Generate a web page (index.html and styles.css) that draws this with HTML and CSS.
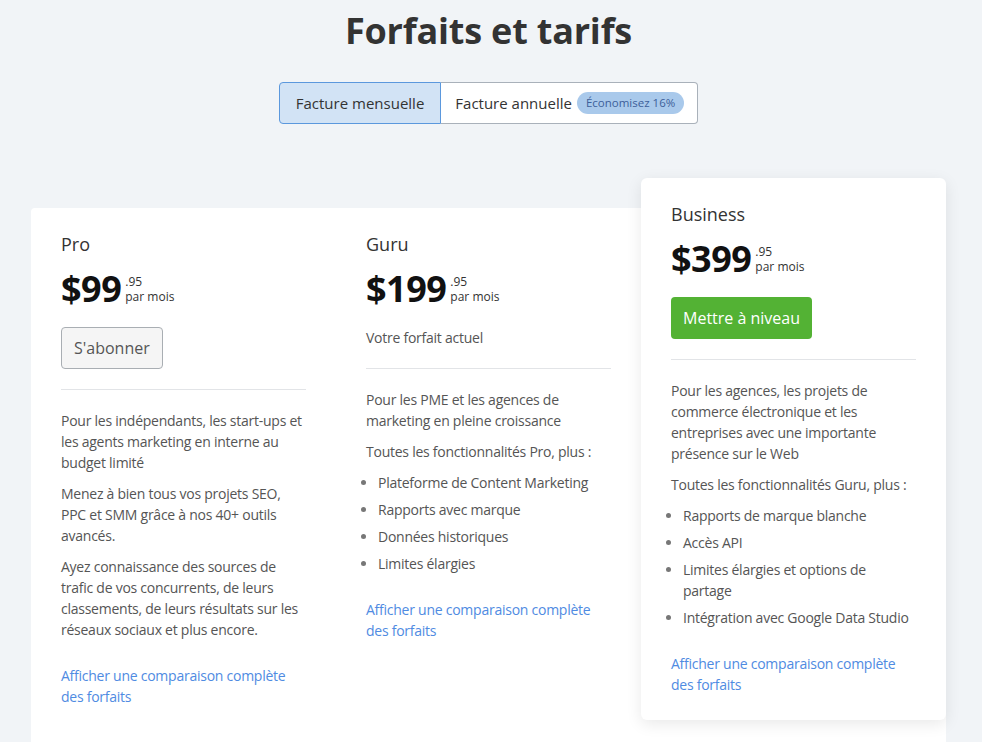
FILE: index.html
```html
<!DOCTYPE html>
<html lang="fr">
<head>
    <meta charset="UTF-8">
    <meta name="viewport" content="width=device-width, initial-scale=1.0">
    <title>Forfaits et tarifs</title>
    <link rel="stylesheet" href="styles.css">
</head>
<body>
    <div class="page">
        <h1>Forfaits et tarifs</h1>

        <div class="billing">
            <button class="billing-opt active">Facture mensuelle</button>
            <button class="billing-opt">Facture annuelle <span class="save-badge">Économisez 16%</span></button>
        </div>

        <div class="plans">
            <div class="plan">
                <div class="plan-name">Pro</div>
                <div class="price">
                    <span class="amount">$99</span>
                    <span class="price-small"><span>.95</span><span>par mois</span></span>
                </div>
                <button class="btn-subscribe">S'abonner</button>
                <hr>
                <p>Pour les indépendants, les start-ups et les agents marketing en interne au budget limité</p>
                <p>Menez à bien tous vos projets SEO, PPC et SMM grâce à nos 40+ outils avancés.</p>
                <p>Ayez connaissance des sources de trafic de vos concurrents, de leurs classements, de leurs résultats sur les réseaux sociaux et plus encore.</p>
                <a class="compare" href="#">Afficher une comparaison complète des forfaits</a>
            </div>

            <div class="plan">
                <div class="plan-name">Guru</div>
                <div class="price">
                    <span class="amount">$199</span>
                    <span class="price-small"><span>.95</span><span>par mois</span></span>
                </div>
                <div class="current">Votre forfait actuel</div>
                <hr>
                <p>Pour les PME et les agences de marketing en pleine croissance</p>
                <p>Toutes les fonctionnalités Pro, plus :</p>
                <ul>
                    <li>Plateforme de Content Marketing</li>
                    <li>Rapports avec marque</li>
                    <li>Données historiques</li>
                    <li>Limites élargies</li>
                </ul>
                <a class="compare" href="#">Afficher une comparaison complète des forfaits</a>
            </div>

            <div class="plan featured">
                <div class="plan-name">Business</div>
                <div class="price">
                    <span class="amount">$399</span>
                    <span class="price-small"><span>.95</span><span>par mois</span></span>
                </div>
                <button class="btn-upgrade">Mettre à niveau</button>
                <hr>
                <p>Pour les agences, les projets de commerce électronique et les entreprises avec une importante présence sur le Web</p>
                <p>Toutes les fonctionnalités Guru, plus :</p>
                <ul>
                    <li>Rapports de marque blanche</li>
                    <li>Accès API</li>
                    <li>Limites élargies et options de partage</li>
                    <li>Intégration avec Google Data Studio</li>
                </ul>
                <a class="compare" href="#">Afficher une comparaison complète des forfaits</a>
            </div>
        </div>
    </div>
</body>
</html>
```

FILE: styles.css
```css
body {
    margin: 0;
    background-color: #f1f4f7;
    font-family: "Open Sans", "Noto Sans", sans-serif;
    color: #555;
}
.page {
    width: 915px;
    margin-left: 31px;
    display: flex;
    flex-direction: column;
    align-items: center;
}
h1 {
    margin: 9px 0 0;
    font-size: 36px;
    line-height: 44px;
    font-weight: 700;
    color: #333;
    letter-spacing: -0.2px;
}
.billing {
    display: flex;
    margin-top: 29px;
    border-radius: 4px;
}
.billing-opt {
    display: flex;
    align-items: center;
    height: 42px;
    padding: 0 13px 0 14px;
    font-family: inherit;
    font-size: 15px;
    color: #333;
    background: white;
    border: 1px solid #a9b1ba;
    border-left: none;
    border-radius: 0 4px 4px 0;
    cursor: pointer;
}
.billing-opt.active {
    padding: 0 16px;
    background-color: #d2e3f5;
    border: 1px solid #5b98dd;
    border-radius: 4px 0 0 4px;
}
.save-badge {
    margin-left: 5px;
    padding: 0 9px;
    height: 22px;
    line-height: 22px;
    font-size: 11.5px;
    color: #3d5f9a;
    background-color: #a9c9eb;
    border-radius: 11px;
}
.plans {
    align-self: stretch;
    display: grid;
    grid-template-columns: repeat(3, 1fr);
    align-items: start;
    margin-top: 84px;
    padding-bottom: 60px;
    background: white;
    border-radius: 4px;
}
.plan {
    padding: 24px 30px 0;
    letter-spacing: -0.25px;
}
.plan.featured {
    margin-top: -30px;
    padding-bottom: 25px;
    background: white;
    border-radius: 6px;
    box-shadow: 0 4px 16px rgba(0, 0, 0, 0.09);
}
.plan-name {
    font-size: 18px;
    line-height: 24px;
    color: #333;
    letter-spacing: 0;
}
.price {
    display: flex;
    align-items: flex-start;
    margin-top: 12px;
}
.amount {
    font-size: 36px;
    line-height: 42px;
    font-weight: 700;
    color: #111;
    letter-spacing: -0.5px;
}
.price-small {
    display: flex;
    flex-direction: column;
    margin: 6px 0 0 4px;
    font-size: 12px;
    line-height: 15px;
    color: #333;
    letter-spacing: 0;
}
.btn-subscribe {
    display: block;
    margin-top: 17px;
    height: 42px;
    padding: 0 12px;
    font-family: inherit;
    font-size: 16px;
    color: #555;
    background-color: #f5f5f5;
    border: 1px solid #a9aeb3;
    border-radius: 4px;
    cursor: pointer;
}
.btn-upgrade {
    display: block;
    margin-top: 17px;
    height: 42px;
    padding: 0 12px;
    font-family: inherit;
    font-size: 16px;
    color: white;
    background-color: #53b234;
    border: none;
    border-radius: 4px;
    cursor: pointer;
}
.current {
    margin-top: 17px;
    font-size: 14px;
    line-height: 21px;
}
hr {
    margin: 20px 0;
    border: none;
    border-top: 1px solid #e2e4e7;
}
p {
    margin: 0 0 10px;
    font-size: 14px;
    line-height: 21px;
}
ul {
    margin: 0;
    padding-left: 12px;
}
li {
    margin-bottom: 6px;
    font-size: 14px;
    line-height: 21px;
}
li::marker {
    color: #777;
}
.compare {
    display: block;
    margin-top: 25px;
    font-size: 14px;
    line-height: 21px;
    color: #4f8be2;
    text-decoration: none;
}
```
